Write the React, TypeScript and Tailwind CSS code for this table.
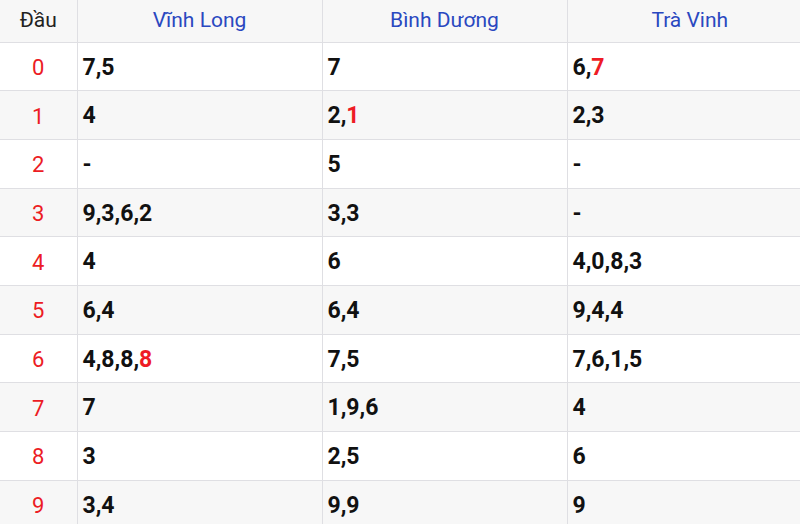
import React from "react";

type Cell = { text: string; red?: boolean }[];

const rows: { d: string; cols: Cell[] }[] = [
  { d: "0", cols: [[{ text: "7,5" }], [{ text: "7" }], [{ text: "6," }, { text: "7", red: true }]] },
  { d: "1", cols: [[{ text: "4" }], [{ text: "2," }, { text: "1", red: true }], [{ text: "2,3" }]] },
  { d: "2", cols: [[{ text: "-" }], [{ text: "5" }], [{ text: "-" }]] },
  { d: "3", cols: [[{ text: "9,3,6,2" }], [{ text: "3,3" }], [{ text: "-" }]] },
  { d: "4", cols: [[{ text: "4" }], [{ text: "6" }], [{ text: "4,0,8,3" }]] },
  { d: "5", cols: [[{ text: "6,4" }], [{ text: "6,4" }], [{ text: "9,4,4" }]] },
  { d: "6", cols: [[{ text: "4,8,8," }, { text: "8", red: true }], [{ text: "7,5" }], [{ text: "7,6,1,5" }]] },
  { d: "7", cols: [[{ text: "7" }], [{ text: "1,9,6" }], [{ text: "4" }]] },
  { d: "8", cols: [[{ text: "3" }], [{ text: "2,5" }], [{ text: "6" }]] },
  { d: "9", cols: [[{ text: "3,4" }], [{ text: "9,9" }], [{ text: "9" }]] },
];

export default function App() {
  return (
    <div className="w-[800px] h-[524px] overflow-hidden bg-white" style={{ fontFamily: "Roboto, 'Noto Sans', sans-serif" }}>
      <table className="w-[812px] border-collapse table-fixed">
        <colgroup>
          <col className="w-[77px]" />
          <col className="w-[245px]" />
          <col className="w-[245px]" />
          <col className="w-[245px]" />
        </colgroup>
        <thead>
          <tr className="h-[42px] bg-[#f7f7f7]">
            <th className="border-r border-b border-[#dfdfe3] text-[21px] font-normal text-[#222] text-center">Đầu</th>
            <th className="border-r border-b border-[#dfdfe3] text-[21px] font-normal text-[#2a48c0] text-center">Vĩnh Long</th>
            <th className="border-r border-b border-[#dfdfe3] text-[21px] font-normal text-[#2a48c0] text-center">Bình Dương</th>
            <th className="border-b border-[#dfdfe3] text-[21px] font-normal text-[#2a48c0] text-center">Trà Vinh</th>
          </tr>
        </thead>
        <tbody>
          {rows.map((r, i) => (
            <tr key={r.d} className={`h-[48.7px] ${i % 2 === 1 ? "bg-[#f7f7f7]" : "bg-white"}`}>
              <td className="border-r border-b border-[#dfdfe3] pt-[2px] text-center text-[22px] text-[#ec1c24]">{r.d}</td>
              {r.cols.map((c, j) => (
                <td key={j} className={`${j < 2 ? "border-r" : ""} border-b border-[#dfdfe3] pl-[5px] pt-[3px] text-[23px] font-bold text-[#111]`}>
                  {c.map((p, k) => (
                    <span key={k} className={p.red ? "text-[#ee1c25]" : ""}>{p.text}</span>
                  ))}
                </td>
              ))}
            </tr>
          ))}
        </tbody>
      </table>
    </div>
  );
}
